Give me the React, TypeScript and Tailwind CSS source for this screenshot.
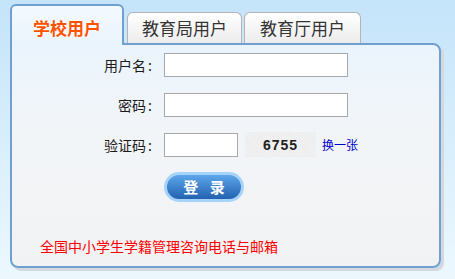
import React, { useState } from 'react';

// Login box with role tabs (school / education bureau / education department)
const TABS = ['学校用户', '教育局用户', '教育厅用户'];

const Label = ({ text }: { text: string }) => (
  <span className="w-[140px] text-right text-[14px] leading-[18px] text-[#1a1a1a]">
    {text}
    <span className="ml-[2px]">:</span>
  </span>
);

export default function App() {
  const [active, setActive] = useState(0);
  const [form, setForm] = useState({ user: '', pass: '', code: '' });

  return (
    <div className="w-[455px] h-[279px] bg-gradient-to-b from-[#c4e4fa] to-[#ecf8fe] pl-[10px] pt-[4px] font-['Noto_Sans_CJK_SC',sans-serif]">
      {/* tabs */}
      <div className="relative z-10 flex items-end h-[39px]">
        {TABS.map((t, i) =>
          i === active ? (
            <div
              key={t}
              onClick={() => setActive(i)}
              className="w-[114px] h-[41px] -mb-[2px] border-2 border-b-0 border-[#6fa0cf] rounded-t-[6px] bg-gradient-to-b from-[#f3f9fe] to-[#eaf4fc] flex justify-center pt-[12px] text-[17px] leading-[20px] font-bold text-[#ff5200] [text-shadow:0_0_2px_#fff,0_0_3px_#fff]"
            >
              {t}
            </div>
          ) : (
            <div
              key={t}
              onClick={() => setActive(i)}
              className={
                'h-[31px] border border-b-0 border-[#b4b4b4] rounded-t-[6px] bg-gradient-to-b from-[#ffffff] to-[#ececec] flex items-center justify-center text-[17px] leading-[20px] text-[#333] ' +
                (i === 1 ? 'w-[115px] ml-[3px]' : 'w-[117px] ml-[2px]')
              }
            >
              {t}
            </div>
          )
        )}
      </div>

      {/* panel */}
      <div className="w-[431px] h-[225px] border-2 border-[#6fa0cf] rounded-[8px] rounded-tl-none bg-gradient-to-b from-[#eaf4fc] via-[#f2f5f8] via-40% to-[#f1f2f3] shadow-[3px_3px_0_#d3d9de] pt-[8px] text-[13px] leading-[16px] text-[#222]">
        <div className="flex items-center h-[24px]">
          <Label text="用户名" />
          <input
            className="ml-[12px] w-[184px] h-[24px] border border-[#a8a8a8] bg-white outline-none px-1"
            value={form.user}
            onChange={(e) => setForm({ ...form, user: e.target.value })}
          />
        </div>
        <div className="flex items-center h-[24px] mt-[16px]">
          <Label text="密码" />
          <input
            type="password"
            className="ml-[12px] w-[184px] h-[24px] border border-[#a8a8a8] bg-white outline-none px-1"
            value={form.pass}
            onChange={(e) => setForm({ ...form, pass: e.target.value })}
          />
        </div>
        <div className="flex items-center h-[25px] mt-[15px]">
          <Label text="验证码" />
          <input
            className="ml-[12px] w-[74px] h-[24px] border border-[#a8a8a8] bg-white outline-none px-1"
            value={form.code}
            onChange={(e) => setForm({ ...form, code: e.target.value })}
          />
          <div className="ml-[7px] w-[71px] h-[25px] bg-[repeating-linear-gradient(45deg,#e6e6e6_0px,#f6f6f6_1px,#eaeaea_2px)] flex items-center justify-center font-['Liberation_Sans',sans-serif] font-bold text-[14px] tracking-[1px] text-[#222]">
            6755
          </div>
          <a href="#" className="ml-[6px] text-[12px] text-[#0000cc]">
            换一张
          </a>
        </div>
        <div className="mt-[15px] ml-[152px]">
          <button className="w-[80px] h-[30px] rounded-full bg-[#a6d3fa] p-[3px]">
            <span className="flex h-full items-center justify-center rounded-full bg-gradient-to-b from-[#5ea6ea] to-[#2262b0] text-white font-bold text-[15px] tracking-[4px] pl-[4px]">
              登 录
            </span>
          </button>
        </div>
        <p className="mt-[35px] pl-[28px] text-[14px] leading-[18px] text-[#ff0000]">
          全国中小学生学籍管理咨询电话与邮箱
        </p>
      </div>
    </div>
  );
}
